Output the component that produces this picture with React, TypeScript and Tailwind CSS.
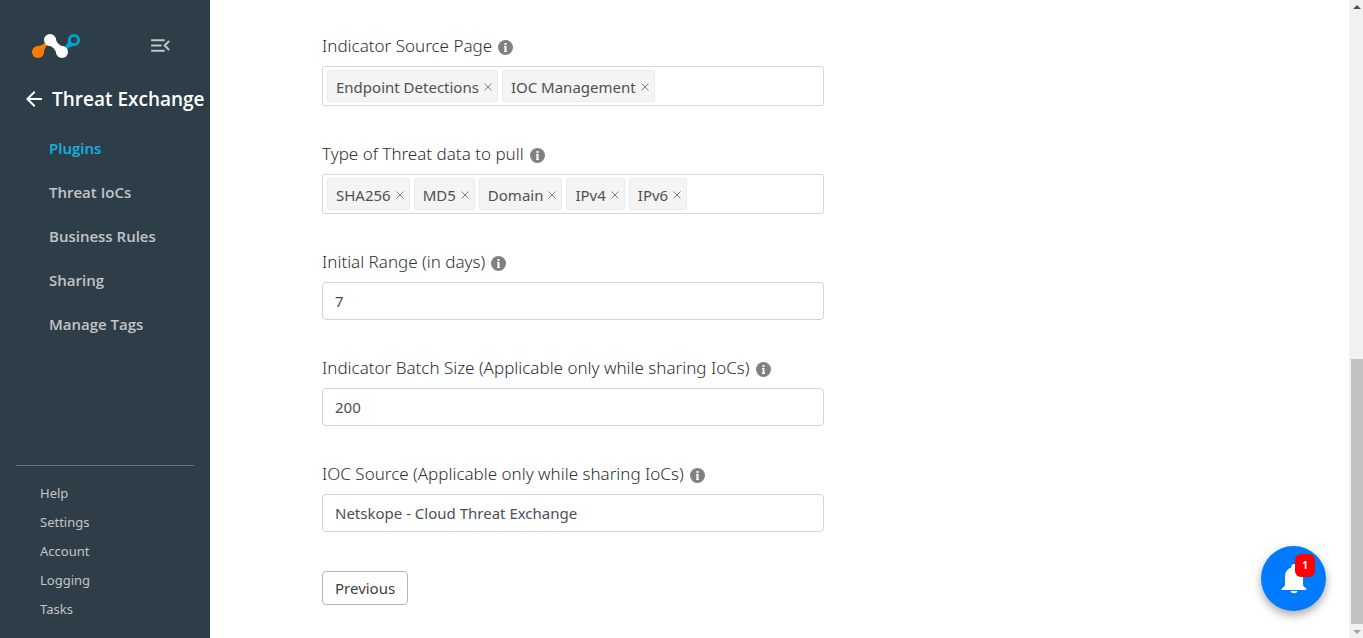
import React, { useState } from 'react';
import { MdArrowBack, MdMenuOpen } from 'react-icons/md';

const NAV_ITEMS = ['Plugins', 'Threat IoCs', 'Business Rules', 'Sharing', 'Manage Tags'];
const FOOTER_ITEMS = ['Help', 'Settings', 'Account', 'Logging', 'Tasks'];

const Logo: React.FC = () => (
  <svg width="48" height="24" viewBox="0 0 48 24" aria-hidden="true">
    <path d="M2 13.6C6 11.5 9.500 12.500 12.600 8.800L15.200 11.400C11.500 14.500 12.500 18 10.400 22Z" fill="#ff7b00" />
    <circle cx="6" cy="18" r="6" fill="#ff7b00" />
    <path d="M46 10.400C42 12.800 38.500 11.200 35.600 15.200L32.800 12.400C36.800 9.500 35.200 6 37.600 2Z" fill="#00a4cc" />
    <circle cx="42" cy="6" r="6" fill="#00a4cc" />
    <circle cx="42" cy="6" r="3.200" fill="#2d3e48" />
    <path d="M23 2.700C24.500 9 27 11.500 33.300 13L25 21.300C23.500 15 21 12.500 14.700 11Z" fill="#fff" />
    <circle cx="18" cy="6" r="6" fill="#fff" />
    <circle cx="30" cy="18" r="6" fill="#fff" />
  </svg>
);

const BellIcon: React.FC = () => (
  <svg width="26" height="30" viewBox="0 0 26 30" fill="currentColor" aria-hidden="true">
    <path d="M13 0c-1.500 0-2.600 1.100-2.600 2.600v1C6.500 4.800 4 8.200 4 12.500V20c0 1.300-.5 2.200-1.300 3L.7 24.600V26h24.600v-1.400L23.300 23c-.8-.8-1.300-1.700-1.300-3v-7.500c0-4.300-2.500-7.700-6.400-8.900v-1C15.600 1.100 14.500 0 13 0z" />
    <path d="M9.500 27h7c-.3 1.300-1.700 2.300-3.500 2.300S9.800 28.300 9.500 27z" />
  </svg>
);

const Sidebar: React.FC = () => {
  const [active, setActive] = useState('Plugins');

  return (
    <aside className="flex w-[210px] shrink-0 flex-col bg-[#2d3e48] text-[#c4c4c4]">
      <div className="flex items-center justify-between pt-[33px] pr-[37px] pl-8">
        <Logo />
        <button type="button" aria-label="Collapse menu">
          <MdMenuOpen className="size-[25px] text-[#c4c4c4]" />
        </button>
      </div>
      <a href="#back" className="mt-[27px] flex items-center gap-[6px] pl-[22px] font-['Open_Sans','Noto_Sans',sans-serif] text-[19px] leading-7 font-semibold whitespace-nowrap text-white">
        <MdArrowBack className="size-6 shrink-0" />
        Threat Exchange
      </a>
      <nav className="mt-[13px] flex flex-col pl-[49px] font-['Open_Sans','Noto_Sans',sans-serif]">
        {NAV_ITEMS.map(item => (
          <a
            key={item}
            href="#nav"
            onClick={() => setActive(item)}
            className={`text-[15px] leading-[44px] font-semibold ${item === active ? 'text-[#11b5e4]' : 'text-[#c4c4c4]'}`}
          >
            {item}
          </a>
        ))}
      </nav>
      <div className="mx-4 mt-auto flex flex-col border-t border-[#66717c] pt-[13px] pb-[14px] pl-6">
        {FOOTER_ITEMS.map(item => (
          <a key={item} href="#footer" className="text-[13px] leading-[29px]">
            {item}
          </a>
        ))}
      </div>
    </aside>
  );
};

const FieldLabel: React.FC<{ htmlFor: string; text: string }> = ({ htmlFor, text }) => (
  <div className="mb-2 flex items-center gap-[6px]">
    <label htmlFor={htmlFor} className="text-[17px] leading-6 font-light text-[#303030]">{text}</label>
    <button type="button" aria-label={`About ${text}`} className="pt-[2px]">
      <svg width="15" height="15" viewBox="0 0 15 15" aria-hidden="true">
        <circle cx="7.500" cy="7.500" r="7.500" fill="#808080" />
        <path d="M6.500 3h2v2h-2zM6 6h2.500v5H9v1H6v-1h.5V7H6z" fill="#fff" />
      </svg>
    </button>
  </div>
);

const TagField: React.FC<{ id: string; label: string; initial: string[] }> = ({ id, label, initial }) => {
  const [tags, setTags] = useState(initial);

  return (
    <div>
      <FieldLabel htmlFor={id} text={label} />
      <div className="flex h-10 items-center gap-1 rounded-xs border border-[#d9d9d9] px-1">
        {tags.map(tag => (
          <span key={tag} className="flex h-8 items-center gap-1 rounded-xs border border-[#ececec] bg-[#f4f4f4] pt-[2px] pr-1 pl-2 text-[15px] whitespace-nowrap text-[#505050]">
            {tag}
            <button type="button" aria-label={`Remove ${tag}`} onClick={() => setTags(prev => prev.filter(t => t !== tag))}>
              <svg width="10" height="10" viewBox="0 0 10 10" stroke="#808080" aria-hidden="true">
                <path d="M1.500 1.500l7 7M8.500 1.500l-7 7" />
              </svg>
            </button>
          </span>
        ))}
        <input id={id} className="min-w-0 flex-1 outline-none" />
      </div>
    </div>
  );
};

const TextField: React.FC<{ id: string; label: string; initial: string }> = ({ id, label, initial }) => (
  <div>
    <FieldLabel htmlFor={id} text={label} />
    <input
      id={id}
      defaultValue={initial}
      className="block h-[38px] w-full rounded border border-[#ced4da] px-3 text-[15px] text-[#495057] outline-none"
    />
  </div>
);

const Scrollbar: React.FC = () => (
  <div className="flex w-[14px] shrink-0 flex-col items-center bg-[#f1f1f1]" aria-hidden="true">
    <svg width="14" height="14" viewBox="0 0 14 14"><path d="M4 9h8L8 5z" fill="#505050" /></svg>
    <div className="flex w-full flex-1 flex-col justify-end pl-[2px]">
      <div className="h-[43.500%] bg-[#c1c1c1]" />
    </div>
    <svg width="14" height="14" viewBox="0 0 14 14"><path d="M4 6h8l-4 4z" fill="#a3a3a3" /></svg>
  </div>
);

export default function App() {
  return (
    <div className="flex min-h-screen bg-white font-['Noto_Sans','Open_Sans',sans-serif]">
      <Sidebar />
      <main className="flex-1 px-28 pt-[34px] pb-8">
        <form className="flex max-w-[502px] flex-col gap-9" onSubmit={e => e.preventDefault()}>
          <TagField id="source-page" label="Indicator Source Page" initial={['Endpoint Detections', 'IOC Management']} />
          <TagField id="threat-type" label="Type of Threat data to pull" initial={['SHA256', 'MD5', 'Domain', 'IPv4', 'IPv6']} />
          <TextField id="initial-range" label="Initial Range (in days)" initial="7" />
          <TextField id="batch-size" label="Indicator Batch Size (Applicable only while sharing IoCs)" initial="200" />
          <TextField id="ioc-source" label="IOC Source (Applicable only while sharing IoCs)" initial="Netskope - Cloud Threat Exchange" />
          <button type="button" className="mt-[3px] h-[34px] self-start rounded border border-[#b3b3b3] px-3 text-[15px] text-[#404040]">
            Previous
          </button>
        </form>
      </main>
      <button
        type="button"
        aria-label="Notifications"
        className="fixed right-[37px] bottom-[27px] flex size-[65px] items-center justify-center rounded-full bg-[#007bff] text-white shadow-[0_4px_10px_rgba(0,0,0,0.35)]"
      >
        <BellIcon />
        <span className="absolute top-2 right-[11px] flex h-[23px] w-5 items-center justify-center rounded-md bg-[#ff0000] text-[10px] font-bold">1</span>
      </button>
      <Scrollbar />
    </div>
  );
}
